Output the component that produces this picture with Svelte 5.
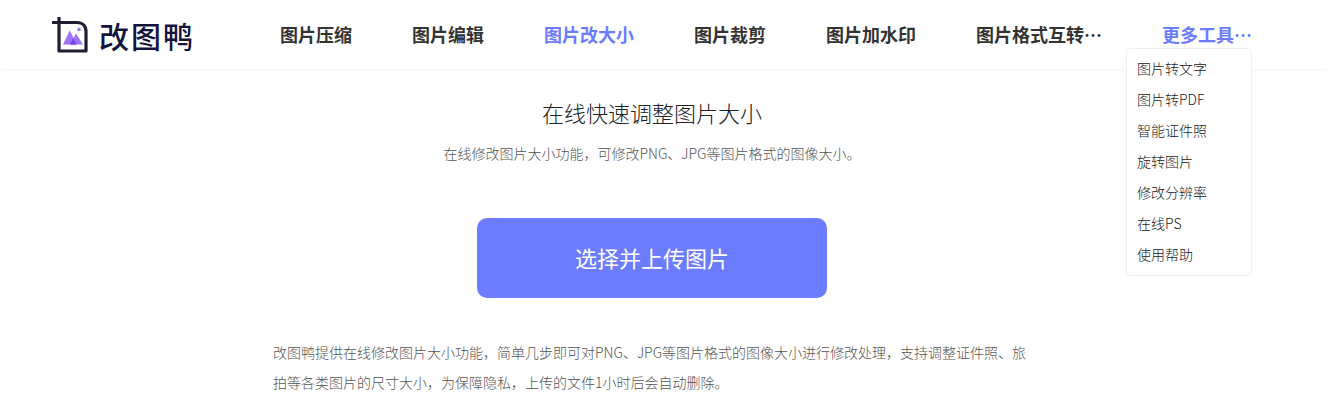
<script>
  const nav = [
    { label: '图片压缩' },
    { label: '图片编辑' },
    { label: '图片改大小', active: true },
    { label: '图片裁剪' },
    { label: '图片加水印' },
    { label: '图片格式互转…' },
    { label: '更多工具…', active: true }
  ];
  const menu = ['图片转文字', '图片转PDF', '智能证件照', '旋转图片', '修改分辨率', '在线PS', '使用帮助'];
</script>

<header class="header">
  <div class="logo">
    <svg width="38" height="38" viewBox="0 0 38 38" fill="none">
      <path d="M1 6.5H26C31.5 6.5 35 10 35 15.5V35H8V1" stroke="#1c1c33" stroke-width="3.2" stroke-linejoin="round"/>
      <path d="M12 28.5L18.7 14.5L26 28.5Z" fill="#9d72f9"/>
      <path d="M19 28.5L25 17.5L32 28.5Z" fill="#9d72f9"/>
      <path d="M19 28.5L22.3 22.4L25.5 28.5Z" fill="#7a3bf2"/>
      <circle cx="28" cy="13.5" r="1.8" fill="#9d72f9"/>
    </svg>
    <span class="brand">改图鸭</span>
  </div>
  <nav class="nav">
    {#each nav as item}
      <span class="nav-item" class:active={item.active}>{item.label}</span>
    {/each}
  </nav>
  <ul class="menu">
    {#each menu as m}
      <li>{m}</li>
    {/each}
  </ul>
</header>

<main class="main">
  <h1 class="title">在线快速调整图片大小</h1>
  <p class="sub">在线修改图片大小功能，可修改PNG、JPG等图片格式的图像大小。</p>
  <button class="upload">选择并上传图片</button>
  <p class="desc">改图鸭提供在线修改图片大小功能，简单几步即可对PNG、JPG等图片格式的图像大小进行修改处理，支持调整证件照、旅拍等各类图片的尺寸大小，为保障隐私，上传的文件1小时后会自动删除。</p>
</main>

<style>
  :global(body) {
    margin: 0;
    background: #fff;
    overflow: hidden;
    font-family: "Noto Sans CJK SC", "Liberation Sans", sans-serif;
  }
  .header {
    position: relative;
    height: 69px;
    display: flex;
    align-items: center;
    padding-left: 51px;
    box-shadow: 0 1px 4px rgba(0, 0, 0, 0.05);
    box-sizing: border-box;
  }
  .logo {
    display: flex;
    align-items: center;
    gap: 10px;
    width: 229px;
    flex: none;
  }
  .brand {
    font-size: 30px;
    font-weight: 500;
    color: #14143f;
    letter-spacing: 2px;
    line-height: 38px;
  }
  .nav {
    display: flex;
    gap: 60px;
    margin-top: -2px;
  }
  .nav-item {
    font-size: 18px;
    font-weight: 700;
    color: #333;
    line-height: 26px;
    white-space: nowrap;
  }
  .nav-item.active {
    color: #6c7cff;
  }
  .menu {
    position: absolute;
    top: 48px;
    left: 1126px;
    width: 126px;
    height: 228px;
    box-sizing: border-box;
    margin: 0;
    padding: 4px 10px;
    list-style: none;
    background: #fff;
    border: 1px solid #f0f0f2;
    border-radius: 4px;
    z-index: 2;
  }
  .menu li {
    font-size: 14px;
    line-height: 31px;
    color: #222;
    font-weight: 300;
    white-space: nowrap;
  }
  .main {
    width: 1304px;
    display: flex;
    flex-direction: column;
    align-items: center;
  }
  .title {
    margin: 27px 0 0;
    font-size: 22px;
    font-weight: 300;
    line-height: 32px;
    color: #222;
  }
  .sub {
    margin: 15px 0 0;
    font-size: 14px;
    font-weight: 300;
    line-height: 20px;
    color: #555;
  }
  .upload {
    margin-top: 55px;
    width: 350px;
    height: 80px;
    border: 0;
    border-radius: 10px;
    background: #6c7cff;
    color: #fff;
    font: inherit;
    font-size: 22px;
    font-weight: 400;
    padding: 0 0 2px;
  }
  .desc {
    margin: 39px 0 0;
    width: 758px;
    font-size: 14px;
    font-weight: 300;
    line-height: 30px;
    color: #555;
  }
</style>
